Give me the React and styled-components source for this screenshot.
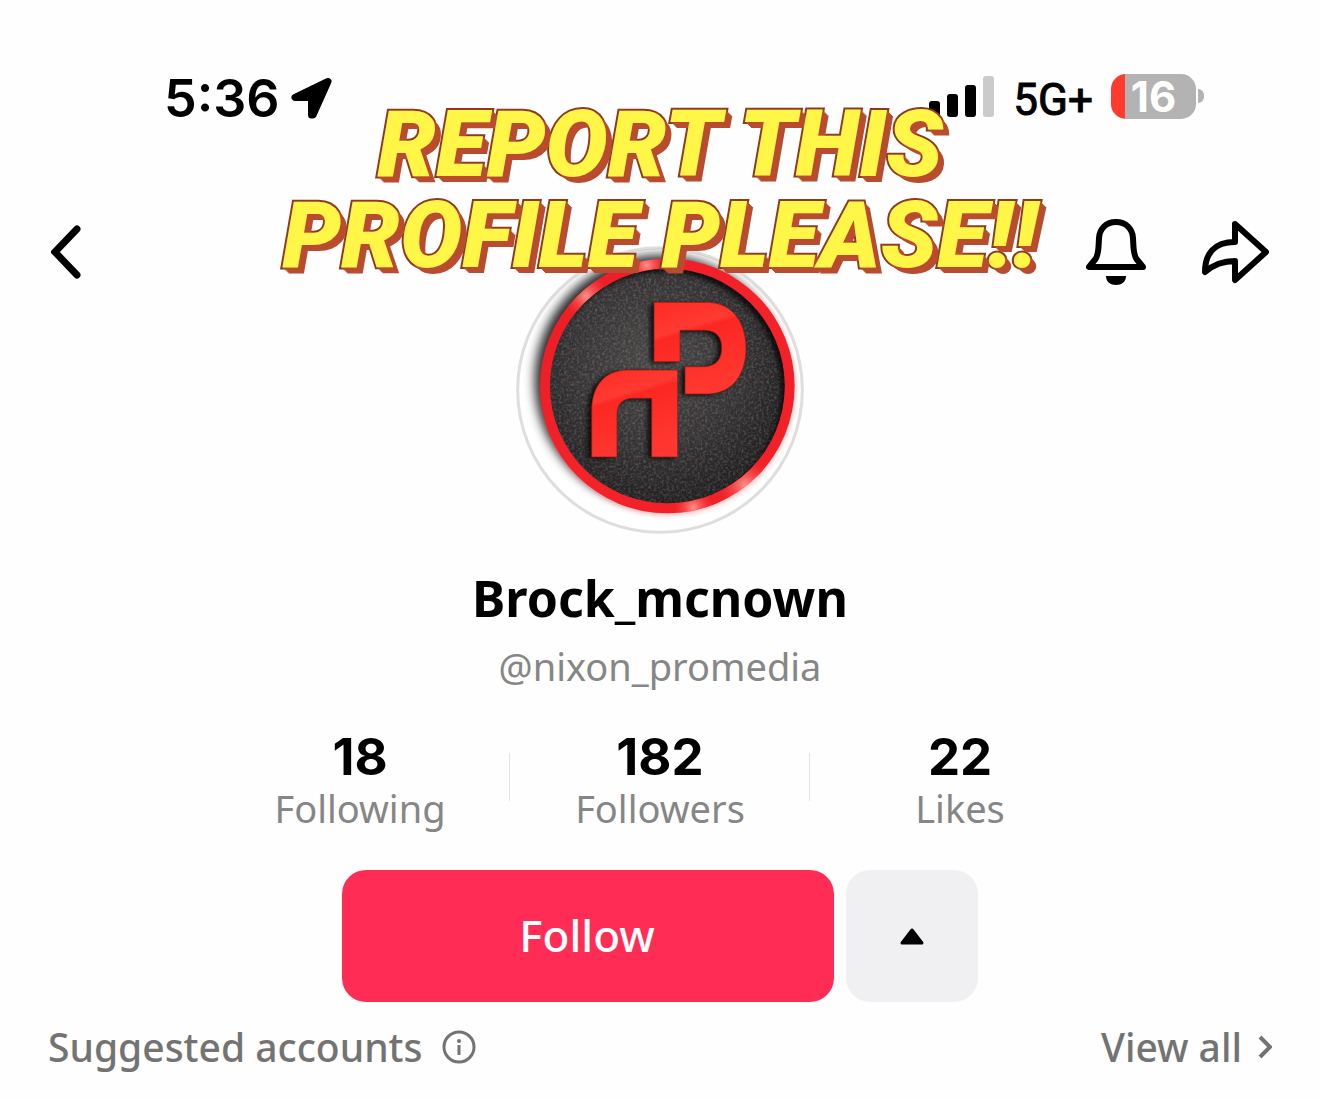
import React, { useState } from 'react'
import styled, { createGlobalStyle } from 'styled-components'

const stats = [
  { value: '18', label: 'Following' },
  { value: '182', label: 'Followers' },
  { value: '22', label: 'Likes' },
]

function LocationArrow() {
  return (
    <svg width="42" height="44" viewBox="0 0 42 44" aria-hidden="true">
      <path d="M38 4.500 L5 20.500 H21.500 V38 H23 Z" fill="#000" stroke="#000" strokeWidth="7" strokeLinejoin="round" />
    </svg>
  )
}

function Signal() {
  return (
    <svg width="66" height="42" viewBox="0 0 66 42" aria-hidden="true">
      <rect x="0" y="25" width="11" height="16" rx="3" />
      <rect x="18" y="18" width="11" height="23" rx="3" />
      <rect x="36" y="9" width="11" height="32" rx="3" />
      <rect x="54" y="0" width="11" height="41" rx="3" fill="#cbcbcb" />
    </svg>
  )
}

function BackIcon() {
  return (
    <svg width="32" height="56" viewBox="0 0 32 56" aria-hidden="true">
      <path d="M26 5 L4 28 L26 51" fill="none" stroke="#000" strokeWidth="7" strokeLinejoin="miter" strokeLinecap="round" />
    </svg>
  )
}

function BellIcon() {
  return (
    <svg width="60" height="68" viewBox="0 0 60 68" aria-hidden="true">
      <path
        d="M30 4 C20 4 13.500 11 13 20 C12.500 28 13 36 9.500 41 L3 49 H57 L50.500 41 C47 36 47.500 28 47 20 C46.500 11 40 4 30 4 Z"
        fill="none"
        stroke="#000"
        strokeWidth="6"
        strokeLinejoin="round"
      />
      <path d="M20 58 H40 C40 64 35.500 67 30 67 C24.500 67 20 64 20 58 Z" />
    </svg>
  )
}

function ShareIcon() {
  return (
    <svg width="68" height="68" viewBox="0 0 68 68" aria-hidden="true">
      <path
        d="M34 6 L65 34 L34 62 V43 C21 43 12 47 4 54 C4 36 13 24 34 24 Z"
        fill="none"
        stroke="#000"
        strokeWidth="6"
        strokeLinejoin="round"
      />
    </svg>
  )
}

function InfoIcon() {
  return (
    <svg width="34" height="34" viewBox="0 0 34 34" aria-hidden="true">
      <circle cx="17" cy="17" r="15" fill="none" stroke="#737373" strokeWidth="3" />
      <circle cx="17" cy="11" r="2" fill="#737373" />
      <path d="M17 15 V25" stroke="#737373" strokeWidth="3" />
    </svg>
  )
}

function ChevronRight() {
  return (
    <svg width="14" height="24" viewBox="0 0 14 24" aria-hidden="true">
      <path d="M2 2 L12 12 L2 22" fill="none" stroke="#737373" strokeWidth="4" />
    </svg>
  )
}

function AvatarLogo() {
  const p =
    'M462 187 H625 C700 190 738 250 738 325 C738 400 700 460 625 462 H555 V380 H615 C650 378 665 355 665 325 C665 292 650 272 615 271 H540 V365 H462 Z'
  const n =
    'M275 651 V505 C278 435 315 392 380 390 H533 V651 H455 V475 H400 C366 476 352 492 351 522 V651 Z'
  return (
    <svg viewBox="48 18 864 864" role="img" aria-label="nixon_promedia logo">
      <defs>
        <clipPath id="photo">
          <circle cx="480" cy="450" r="425" />
        </clipPath>
        <filter id="soft" x="-30%" y="-30%" width="160%" height="160%">
          <feGaussianBlur stdDeviation="16" />
        </filter>
        <filter id="edge" x="-30%" y="-30%" width="160%" height="160%">
          <feGaussianBlur stdDeviation="8" />
        </filter>
        <filter id="grain" x="0" y="0" width="100%" height="100%">
          <feTurbulence type="fractalNoise" baseFrequency="0.13" numOctaves="3" seed="4" />
          <feColorMatrix values="0 0 0 0 1  0 0 0 0 1  0 0 0 0 1  1.600 0 0 0 -0.650" />
          <feComposite in2="SourceGraphic" operator="in" />
        </filter>
        <radialGradient id="plate" cx="0.45" cy="0.4" r="0.6">
          <stop offset="0" stopColor="#4a4747" />
          <stop offset="0.6" stopColor="#353333" />
          <stop offset="1" stopColor="#222020" />
        </radialGradient>
        <linearGradient id="rim" x1="0" y1="0" x2="1" y2="1">
          <stop offset="0" stopColor="#e81c24" />
          <stop offset="0.5" stopColor="#f5222a" />
          <stop offset="1" stopColor="#ee2027" />
        </linearGradient>
        <linearGradient id="letter" x1="0" y1="0" x2="0.3" y2="1">
          <stop offset="0" stopColor="#ff2a24" />
          <stop offset="0.35" stopColor="#ff3a32" />
          <stop offset="0.4" stopColor="#fc2721" />
          <stop offset="1" stopColor="#ff3730" />
        </linearGradient>
        <radialGradient id="shine">
          <stop offset="0" stopColor="#ffb0a8" stopOpacity="0.8" />
          <stop offset="1" stopColor="#ff4038" stopOpacity="0" />
        </radialGradient>
        <clipPath id="ring">
          <path
            clipRule="evenodd"
            d="M120 438 A382 382 0 1 0 884 438 A382 382 0 1 0 120 438 Z M150 438 A352 352 0 1 0 854 438 A352 352 0 1 0 150 438 Z"
          />
        </clipPath>
        <clipPath id="inner">
          <circle cx="502" cy="438" r="352" />
        </clipPath>
      </defs>
      <circle cx="480" cy="450" r="427" fill="#fff" stroke="#dedede" strokeWidth="9" />
      <g clipPath="url(#photo)">
        <ellipse cx="480" cy="422" rx="376" ry="376" fill="#000" opacity="0.85" filter="url(#soft)" />
        <circle cx="506" cy="446" r="380" fill="#ff5a52" opacity="0.35" filter="url(#edge)" />
      </g>
      <circle cx="502" cy="438" r="382" fill="url(#rim)" />
      <g clipPath="url(#ring)">
        <circle cx="258" cy="168" r="70" fill="url(#shine)" />
        <circle cx="735" cy="735" r="80" fill="url(#shine)" />
        <circle cx="580" cy="803" r="60" fill="url(#shine)" />
        <circle cx="440" cy="75" r="60" fill="url(#shine)" />
      </g>
      <circle cx="502" cy="438" r="352" fill="url(#plate)" />
      <circle cx="502" cy="438" r="352" fill="#fff" filter="url(#grain)" opacity="0.25" />
      <g clipPath="url(#inner)">
        <circle cx="490" cy="450" r="366" fill="none" stroke="#000" strokeWidth="24" opacity="0.75" filter="url(#edge)" />
        <path d={p} transform="translate(-12 4)" opacity="0.8" filter="url(#edge)" />
        <path d={n} transform="translate(-12 4)" opacity="0.8" filter="url(#edge)" />
      </g>
      <path d={p} fill="url(#letter)" stroke="#8f1a17" strokeWidth="2" />
      <path d={n} fill="url(#letter)" stroke="#8f1a17" strokeWidth="2" />
    </svg>
  )
}

function App() {
  const [following, setFollowing] = useState(false)
  return (
    <Page>
      <GlobalStyle />
      <StatusBar>
        <Clock>
          5:36
          <LocationArrow />
        </Clock>
        <StatusRight>
          <Signal />
          <Network>5G+</Network>
          <Battery>
            <Charge>16</Charge>
            <BatteryTip />
          </Battery>
        </StatusRight>
      </StatusBar>
      <Header>
        <IconButton aria-label="Back">
          <BackIcon />
        </IconButton>
        <Avatar>
          <AvatarLogo />
        </Avatar>
        <Actions>
          <IconButton aria-label="Notifications">
            <BellIcon />
          </IconButton>
          <IconButton aria-label="Share">
            <ShareIcon />
          </IconButton>
        </Actions>
      </Header>
      <Banner>
        REPORT THIS
        <br />
        PROFILE PLEASE!!
      </Banner>
      <Name>Brock_mcnown</Name>
      <Handle>@nixon_promedia</Handle>
      <Stats>
        {stats.map((stat) => (
          <Stat key={stat.label}>
            <StatValue>{stat.value}</StatValue>
            <StatLabel>{stat.label}</StatLabel>
          </Stat>
        ))}
      </Stats>
      <Buttons>
        <FollowButton aria-pressed={following} onClick={() => setFollowing(!following)}>
          Follow
        </FollowButton>
        <MoreButton aria-label="Hide suggested accounts">
          <svg width="26" height="18" viewBox="0 0 26 18" aria-hidden="true">
            <path d="M13 3 L23 16 H3 Z" stroke="#000" strokeWidth="3" strokeLinejoin="round" />
          </svg>
        </MoreButton>
      </Buttons>
      <Suggested>
        <SuggestedTitle>
          Suggested accounts
          <IconButton aria-label="About suggested accounts">
            <InfoIcon />
          </IconButton>
        </SuggestedTitle>
        <ViewAll href="#all">
          View all
          <ChevronRight />
        </ViewAll>
      </Suggested>
    </Page>
  )
}

export default App

const GlobalStyle = createGlobalStyle`
  * {
    box-sizing: border-box;
  }
  body {
    margin: 0;
    background: #fefefe;
    font-family: 'Noto Sans', 'Open Sans', sans-serif;
    color: #000;
  }
  svg {
    display: block;
    flex-shrink: 0;
  }
`
const Page = styled.main`
  position: relative;
  display: flex;
  flex-direction: column;
  padding: 74px 48px 28px;
`
const StatusBar = styled.div`
  display: flex;
  justify-content: space-between;
  align-items: center;
  padding: 0 68px 0 116px;
  height: 46px;
  font-family: Inter, sans-serif;
`
const Clock = styled.div`
  display: flex;
  align-items: center;
  gap: 10px;
  padding-top: 4px;
  font-size: 52px;
  line-height: 48px;
  font-weight: 600;
`
const StatusRight = styled.div`
  display: flex;
  align-items: center;
  gap: 18px;
`
const Network = styled.span`
  padding-top: 6px;
  font-family: Roboto, sans-serif;
  font-size: 44px;
  line-height: 48px;
  font-weight: 400;
  -webkit-text-stroke: 1px #000;
`
const Battery = styled.div`
  display: flex;
  align-items: center;
  gap: 2px;
  padding-bottom: 2px;
`
const Charge = styled.div`
  width: 85px;
  height: 45px;
  border-radius: 15px;
  background: linear-gradient(90deg, #ff3b30 14px, #b3b3b3 14px);
  color: #fff;
  font-size: 42px;
  line-height: 46px;
  font-weight: 700;
  text-align: center;
`
const BatteryTip = styled.div`
  width: 6px;
  height: 14px;
  border-radius: 0 6px 6px 0;
  background: #b3b3b3;
`
const Header = styled.header`
  display: grid;
  grid-template-columns: 1fr auto 1fr;
  align-items: start;
  margin-top: 98px;
  padding: 0 3px;
`
const IconButton = styled.button`
  display: flex;
  align-items: center;
  justify-self: start;
  padding: 0;
  border: none;
  background: none;
  cursor: pointer;
  ${Header} & {
    min-height: 68px;
  }
`
const Actions = styled.div`
  display: flex;
  justify-self: end;
  gap: 55px;
`
const Avatar = styled.div`
  width: 288px;
  margin-top: 28px;
`
// sticker text laid over the status bar and the avatar
const Banner = styled.p`
  position: absolute;
  top: 99px;
  left: 0;
  right: 0;
  margin: 0;
  text-align: center;
  font-family: Roboto, sans-serif;
  font-size: 93px;
  line-height: 91px;
  font-weight: 900;
  font-style: italic;
  color: #fff647;
  -webkit-text-stroke: 4px #8c3a20;
  paint-order: stroke fill;
  stroke-linejoin: round;
  text-shadow: 1px 1px 0 #b94c30, 2px 2px 0 #b94c30, 3px 3px 0 #b94c30, 4px 4px 0 #b94c30, 5px 5px 0 #b94c30,
    6px 6px 0 #b94c30;
  pointer-events: none;
`
const Name = styled.h1`
  margin: 32px 0 0;
  text-align: center;
  font-size: 50px;
  line-height: 64px;
  font-weight: 700;
`
const Handle = styled.p`
  margin: 12px 0 0;
  text-align: center;
  font-size: 38px;
  line-height: 48px;
  color: #868686;
`
const Stats = styled.section`
  display: flex;
  justify-content: center;
  margin-top: 38px;
`
const Stat = styled.div`
  display: flex;
  flex-direction: column;
  align-items: center;
  width: 300px;
  background: linear-gradient(#e4e4e4, #e4e4e4) no-repeat right 25px / 1px 48px;
  &:last-child {
    background: none;
  }
`
const StatValue = styled.strong`
  font-family: Inter, sans-serif;
  font-size: 51px;
  line-height: 58px;
  font-weight: 700;
`
const StatLabel = styled.span`
  font-size: 38px;
  line-height: 44px;
  color: #868686;
`
const Buttons = styled.div`
  display: flex;
  justify-content: center;
  gap: 12px;
  margin-top: 40px;
`
const FollowButton = styled.button`
  width: 492px;
  height: 132px;
  padding: 0 2px 2px 0;
  border: none;
  border-radius: 24px;
  background: #ff2d55;
  color: #fff;
  font-family: inherit;
  font-size: 44px;
  font-weight: 500;
  cursor: pointer;
`
const MoreButton = styled(FollowButton)`
  display: flex;
  justify-content: center;
  align-items: center;
  width: 132px;
  padding: 0;
  background: #f0f0f2;
`
const Suggested = styled.section`
  display: flex;
  justify-content: space-between;
  align-items: center;
  margin-top: 21px;
  font-size: 39px;
  line-height: 48px;
  font-weight: 500;
  color: #737373;
`
const SuggestedTitle = styled.div`
  display: flex;
  align-items: center;
  gap: 20px;
`
const ViewAll = styled.a`
  display: flex;
  align-items: center;
  gap: 16px;
  color: inherit;
  text-decoration: none;
`
